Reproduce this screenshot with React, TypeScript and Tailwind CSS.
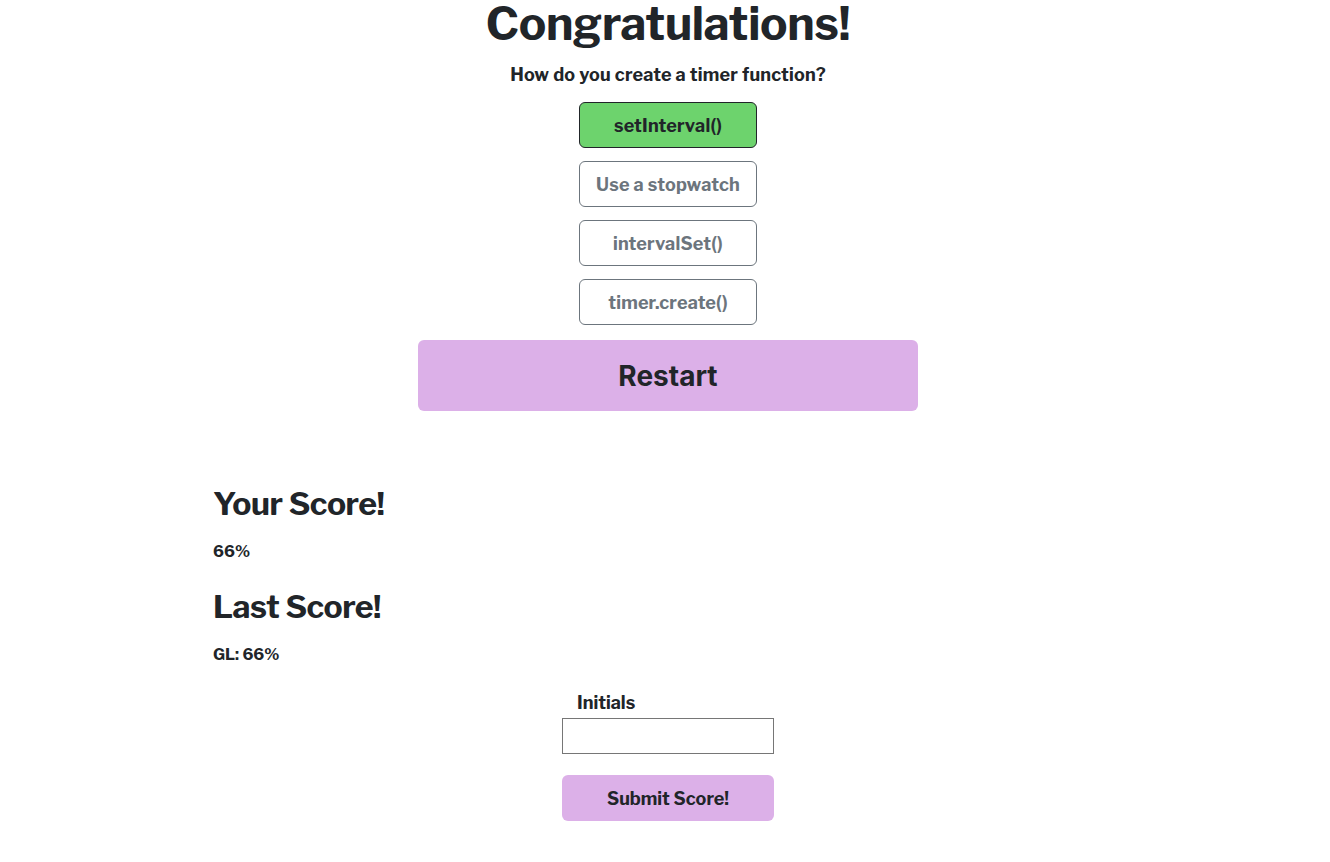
const answers = [
	{ text: "setInterval()", correct: true },
	{ text: "Use a stopwatch", correct: false },
	{ text: "intervalSet()", correct: false },
	{ text: "timer.create()", correct: false },
];

const font = "font-['Libre_Franklin','Liberation_Sans','Arial',sans-serif]";

export default function App() {
	return (
		<div className={`min-h-screen bg-white text-[#212529] ${font}`}>
			<div className="flex flex-col items-center pl-[6px]">
				<h1 className="text-[46px] leading-[48px] font-bold tracking-[-0.3px]">
					Congratulations!
				</h1>
				<p className="mt-[16px] text-[18px] leading-[22px] font-bold tracking-[0.2px]">
					How do you create a timer function?
				</p>
				<div className="mt-[16px] flex flex-col gap-[13px]">
					{answers.map((a) => (
						<button
							key={a.text}
							className={
								a.correct
									? "w-[178px] h-[46px] rounded-[6px] border border-[#212529] bg-[#6dd36d] text-[#212529] text-[18px] font-bold tracking-[0.2px]"
									: "w-[178px] h-[46px] rounded-[6px] border border-[#6c757d] bg-white text-[#6c757d] text-[18px] font-bold tracking-[0.2px]"
							}
						>
							{a.text}
						</button>
					))}
				</div>
				<button className="mt-[15px] w-[500px] h-[71px] rounded-[6px] bg-[#dcb0e8] text-[28px] font-bold font-['Inter',sans-serif] text-[#212529]">
					Restart
				</button>
			</div>

			<div className="mx-auto w-[904px] mt-[74px]">
				<h2 className="text-[32px] leading-[38px] font-bold tracking-[-0.5px]">Your Score!</h2>
				<p className="mt-[17px] text-[16px] font-bold">66%</p>
				<h2 className="mt-[24px] text-[32px] leading-[38px] font-bold tracking-[-0.5px]">Last Score!</h2>
				<p className="mt-[17px] text-[16px] font-bold">GL: 66%</p>
			</div>

			<div className="mt-[25px] flex flex-col items-center pl-[6px]">
				<div className="w-[212px]">
					<label className="block pl-[15px] text-[18px] leading-[22px] font-bold">Initials</label>
					<input
						type="text"
						className="mt-[4px] block w-[212px] h-[36px] border border-[#767676] bg-white"
					/>
					<button className="mt-[21px] w-[212px] h-[46px] rounded-[6px] bg-[#dcb0e8] text-[18px] font-bold text-[#212529]">
						Submit Score!
					</button>
				</div>
			</div>
		</div>
	);
}
